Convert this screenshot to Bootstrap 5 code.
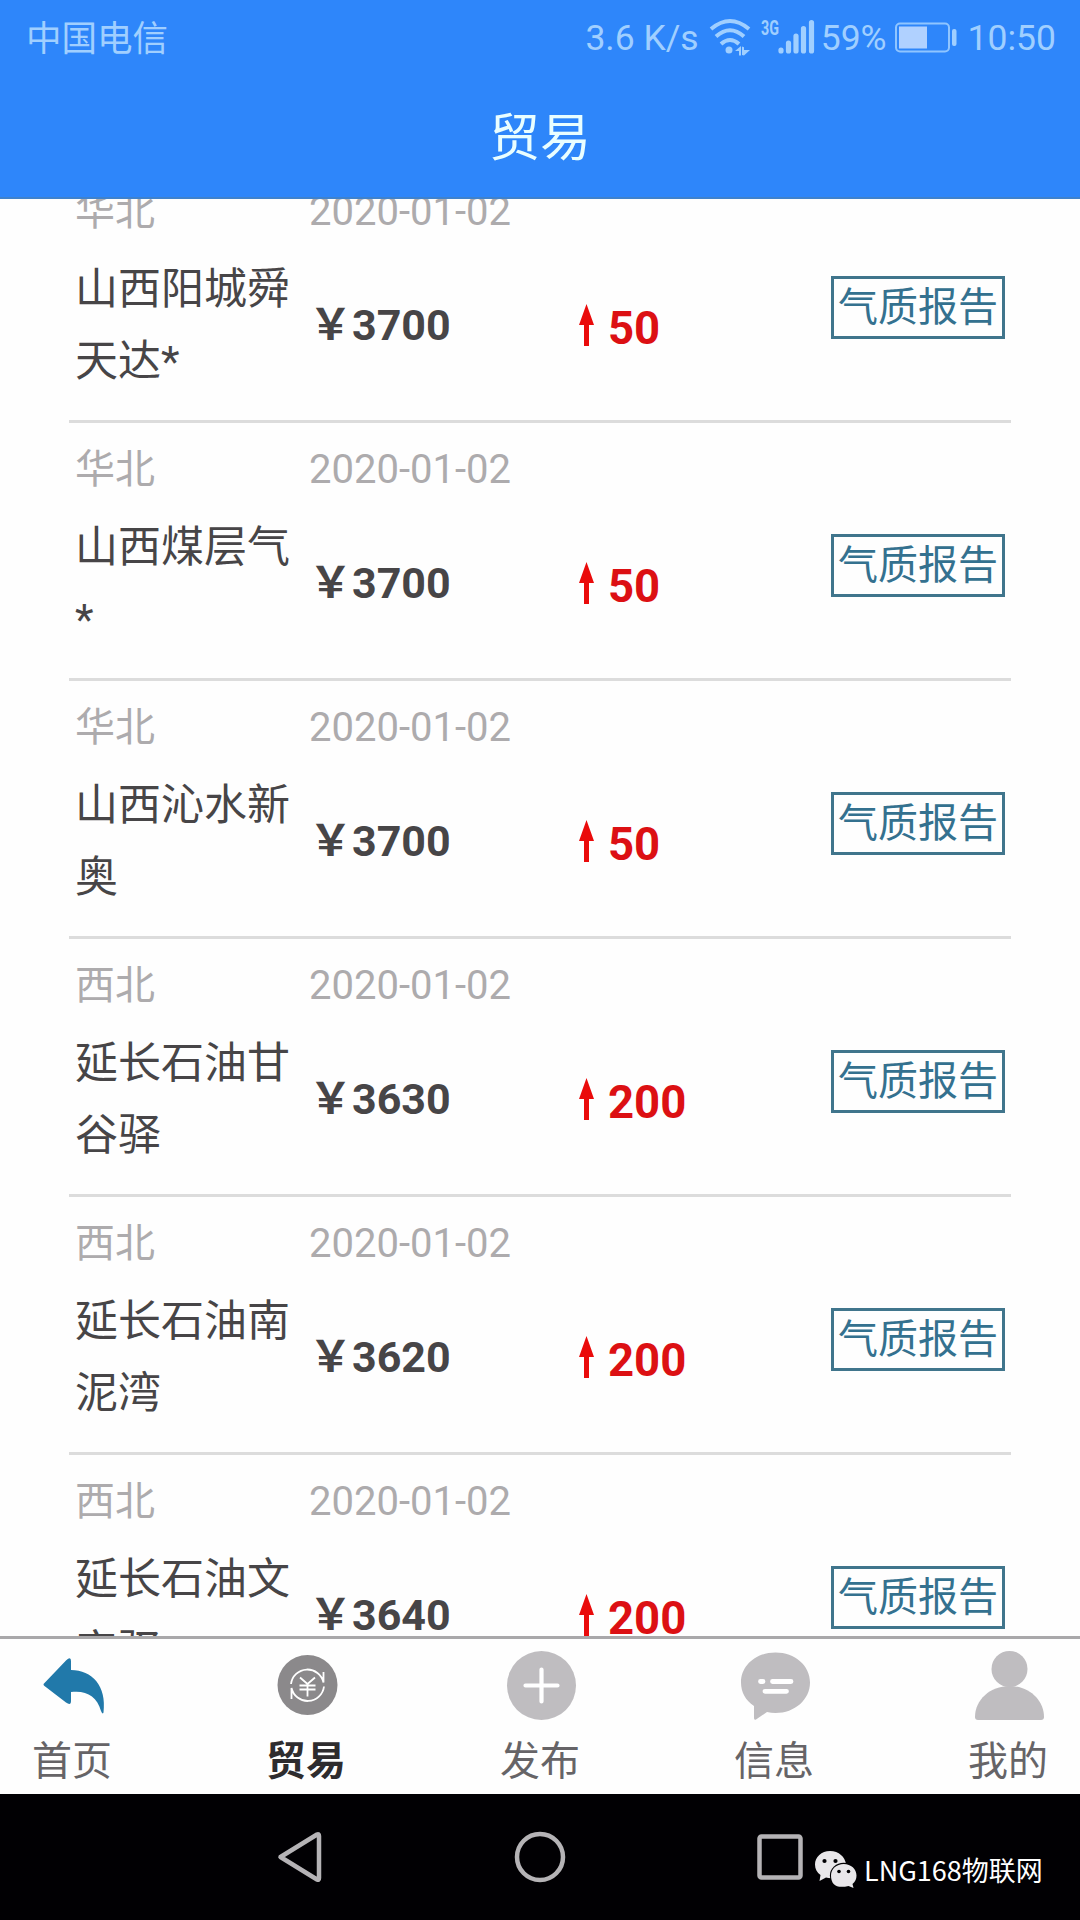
<!DOCTYPE html>
<html lang="zh-CN">
<head>
<meta charset="utf-8">
<meta name="viewport" content="width=device-width, initial-scale=1">
<title>贸易</title>
<link href="https://cdn.jsdelivr.net/npm/bootstrap@5.3.0/dist/css/bootstrap.min.css" rel="stylesheet">
<style>
body{font-family:Roboto,"Noto Sans CJK SC",sans-serif;background:#fefefe;color:#474547;font-size:40px;line-height:1}
.app-screen{width:1080px;height:1920px}
.app-head{height:199px;background:#2e86fa;border-bottom:2px solid #3f82cc}
.status-line{height:76px;padding:0 24px 0 26px;color:#a0cfff;font-size:35.5px}
.status-line span{line-height:76px;white-space:nowrap}
.status-line .carrier{line-height:74px;padding-top:2px}
.page-title{height:121px;font-size:51px;line-height:125px;color:#e9feff;font-weight:400}
.quote-list{width:942px;margin:-34px auto 0}
.quote-clip{min-height:0}
.quote{height:258px;border-bottom:3px solid #dcdcdc;padding:17px 6px 0}
.quote-meta{height:60px;line-height:60px;color:#adabad}
.quote-main{height:144px;margin-top:11px}
.c-name{width:234px;padding-right:15px}
.c-price{width:270px}
.name-text{font-size:43px;line-height:72px}
.price-text{font-size:43px;line-height:70px;font-weight:700}
.diff{color:#dc1013;font-size:45.5px;font-weight:700;padding-top:7px}
.diff svg{margin-right:14px;margin-top:-7px}
.report-btn{width:174px;height:63px;border:3px solid #40758c;color:#34718f;font-size:40px;line-height:56px;padding:0;border-radius:0;margin-top:-35px;white-space:nowrap}
.tab-bar{height:158px;border-top:3px solid #a9a8aa;background:#fefefe;padding:0 32px}
.tab-item{width:80px;color:#666467;text-decoration:none}
.tab-item svg{width:80px;height:92px;flex:none}
.tab-item span{line-height:61px}
.tab-item.active{color:#2e2c2e;font-weight:700}
.sys-bar{height:126px;background:#010003}
.brand-tag{left:814px;top:52px;color:#fff;font-family:"Noto Sans CJK SC",sans-serif;font-size:27px;line-height:48px;white-space:nowrap}
</style>
<script src="https://cdn.jsdelivr.net/npm/bootstrap@5.3.0/dist/js/bootstrap.bundle.min.js"></script>
</head>
<body>
<div class="app-screen d-flex flex-column overflow-hidden">
  <header class="app-head flex-shrink-0">
    <div class="status-line d-flex align-items-center">
      <span class="carrier me-auto">中国电信</span>
      <span>3.6 K/s</span>
      <svg width="42" height="40" viewBox="0 0 42 40" style="margin-left:10px" fill="none" stroke="#a0cfff" stroke-width="4"><path d="M2 11Q21-5 40 11M7 18.500Q21 6 35 18.500M12 26Q21 18 30 26"/><circle cx="20" cy="32" r="3.500" fill="#a0cfff" stroke="none"/><path d="M26 33l6-5v9.500h-2V33zM33 37V28.500l2 .8V32h6l-6 5.500z" fill="#a0cfff" stroke="none"/></svg>
      <svg width="54" height="42" viewBox="0 0 54 42" style="margin-left:10px" stroke="#a0cfff" stroke-width="5.200" stroke-linecap="round"><text x="0" y="17.500" font-size="21" font-weight="700" fill="#a0cfff" stroke="none" textLength="18" lengthAdjust="spacingAndGlyphs">3G</text><path d="M20 33v1M27.500 26v8M35 19v15M42.500 11.500v22.500M50.500 5.500v28.500"/></svg>
      <span style="margin-left:6px">59%</span>
      <svg width="62" height="32" viewBox="0 0 62 32" style="margin-left:8px"><rect x="1" y="1.500" width="53" height="28" rx="4" fill="none" stroke="#8fc5ff" stroke-width="2"/><rect x="4" y="4.500" width="28" height="22" fill="#b0d1ff"/><rect x="57" y="7" width="4.500" height="17" rx="2" fill="#a0cfff"/></svg>
      <span style="margin-left:11px">10:50</span>
    </div>
    <h1 class="page-title text-center m-0">贸易</h1>
  </header>

  <main class="quote-clip flex-grow-1 overflow-hidden">
    <div class="quote-list" id="quotes"></div>
  </main>

  <nav class="tab-bar d-flex justify-content-between flex-shrink-0">
    <a class="tab-item d-flex flex-column align-items-center" href="#"><svg viewBox="0 0 80 92"><path d="M12.500 44L34 21.500Q39 17 39 22V31C60 31 75 47 71.500 73.500Q70.500 76 69 72C65 57 54 51 39 53V62Q39 67 34 63.500L12.500 47Q10.500 45.500 12.500 44Z" fill="#2179aa"/></svg><span>首页</span></a>
    <a class="tab-item active d-flex flex-column align-items-center" href="#"><svg viewBox="0 0 80 92"><circle cx="41.500" cy="46" r="30" fill="#8b898b"/><g fill="none" stroke="#fff" stroke-width="1.800"><path d="M25 45A16.500 16.500 0 0 1 57.500 43.500V33M58 47.500A16.500 16.500 0 0 1 25.500 49V60M34 38.500l7.500 6.500 7.500-6.500M33.500 46.500H49.500M33.500 50.500H49.500M41.500 45V57.500"/></g></svg><span>贸易</span></a>
    <a class="tab-item d-flex flex-column align-items-center" href="#"><svg viewBox="0 0 80 92"><circle cx="41.500" cy="46.500" r="34.500" fill="#bfbdc0"/><path d="M41.500 30.500V62.500M25.500 46.500H57.500" stroke="#fff" stroke-width="4.200" stroke-linecap="round"/></svg><span>发布</span></a>
    <a class="tab-item d-flex flex-column align-items-center" href="#"><svg viewBox="0 0 80 92"><path d="M41.500 13.500C61 13.500 76 26.500 76 43.500S61 74 41.500 74Q37 74 33 73L22 80.500Q20 81.500 20 79V67C11.500 61.500 7 53 7 43.500C7 26.500 22 13.500 41.500 13.500Z" fill="#bfbdc0"/><path d="M26.500 42.500H29M38.500 42.500H57M31 52.300H52.500" stroke="#fff" stroke-width="4.800" stroke-linecap="round"/></svg><span>信息</span></a>
    <a class="tab-item d-flex flex-column align-items-center" href="#"><svg viewBox="0 0 80 92" fill="#bfbdc0"><circle cx="41.500" cy="30" r="18"/><path d="M41.500 47C61 47 76 61 76 78Q76 81 73 81H10Q7 81 7 78C7 61 22 47 41.500 47Z"/></svg><span>我的</span></a>
  </nav>

  <footer class="sys-bar position-relative flex-shrink-0">
    <svg class="d-block" width="1080" height="126" viewBox="0 0 1080 126" fill="none" stroke="#b5b3b6" stroke-width="4.500" stroke-linejoin="round"><path d="M280.500 63L317 40.500Q319 39.500 319 42V84Q319 86.500 317 85.500Z"/><circle cx="540" cy="63" r="23"/><rect x="759.500" y="42.500" width="41" height="41" rx="2"/></svg>
    <div class="brand-tag position-absolute d-flex align-items-center">
      <svg width="44" height="40" viewBox="0 0 44 40" style="margin-right:6px;margin-top:-3px"><path d="M16 2C7.500 2 1 8 1 15.500C1 20 3 23.500 6.500 26L5.500 32L12 28.500Q17 30 22 28.500L32 15C31 8 25 2 16 2Z" fill="#e9e7ea"/><ellipse cx="29.700" cy="26.500" rx="13.800" ry="12.700" fill="#010003"/><path d="M29.700 15C37 15 42.500 20 42.500 26.500Q42.500 32 38.500 35L39.500 39L34.500 37Q17 41 17 26.500C17 20 22.500 15 29.700 15Z" fill="#e9e7ea"/><g fill="#010003"><circle cx="10.500" cy="12" r="2.100"/><circle cx="21.500" cy="12" r="2.100"/><circle cx="25" cy="22.500" r="1.800"/><circle cx="34.500" cy="22.500" r="1.800"/></g></svg>
      <span>LNG168物联网</span>
    </div>
  </footer>
</div>
<script>
const quotes = [
  ['华北', '山西阳城舜天达*', 3700, 50],
  ['华北', '山西煤层气*', 3700, 50],
  ['华北', '山西沁水新奥', 3700, 50],
  ['西北', '延长石油甘谷驿', 3630, 200],
  ['西北', '延长石油南泥湾', 3620, 200],
  ['西北', '延长石油文安驿', 3640, 200]
];
document.getElementById('quotes').innerHTML = quotes.map(([area, name, price, diff]) => `
  <section class="quote">
    <div class="quote-meta d-flex"><div class="c-name">${area}</div><div>2020-01-02</div></div>
    <div class="quote-main d-flex align-items-center">
      <div class="c-name name-text align-self-start">${name}</div>
      <div class="c-price price-text">￥${price}</div>
      <div class="diff d-flex align-items-center"><svg width="15" height="42" viewBox="0 0 15 42"><path d="M7.500 0L15 21H10V42H5V21H0Z" fill="#ea0b0b"/></svg><span>${diff}</span></div>
      <button type="button" class="btn report-btn ms-auto">气质报告</button>
    </div>
  </section>`).join('');
</script>
</body>
</html>
